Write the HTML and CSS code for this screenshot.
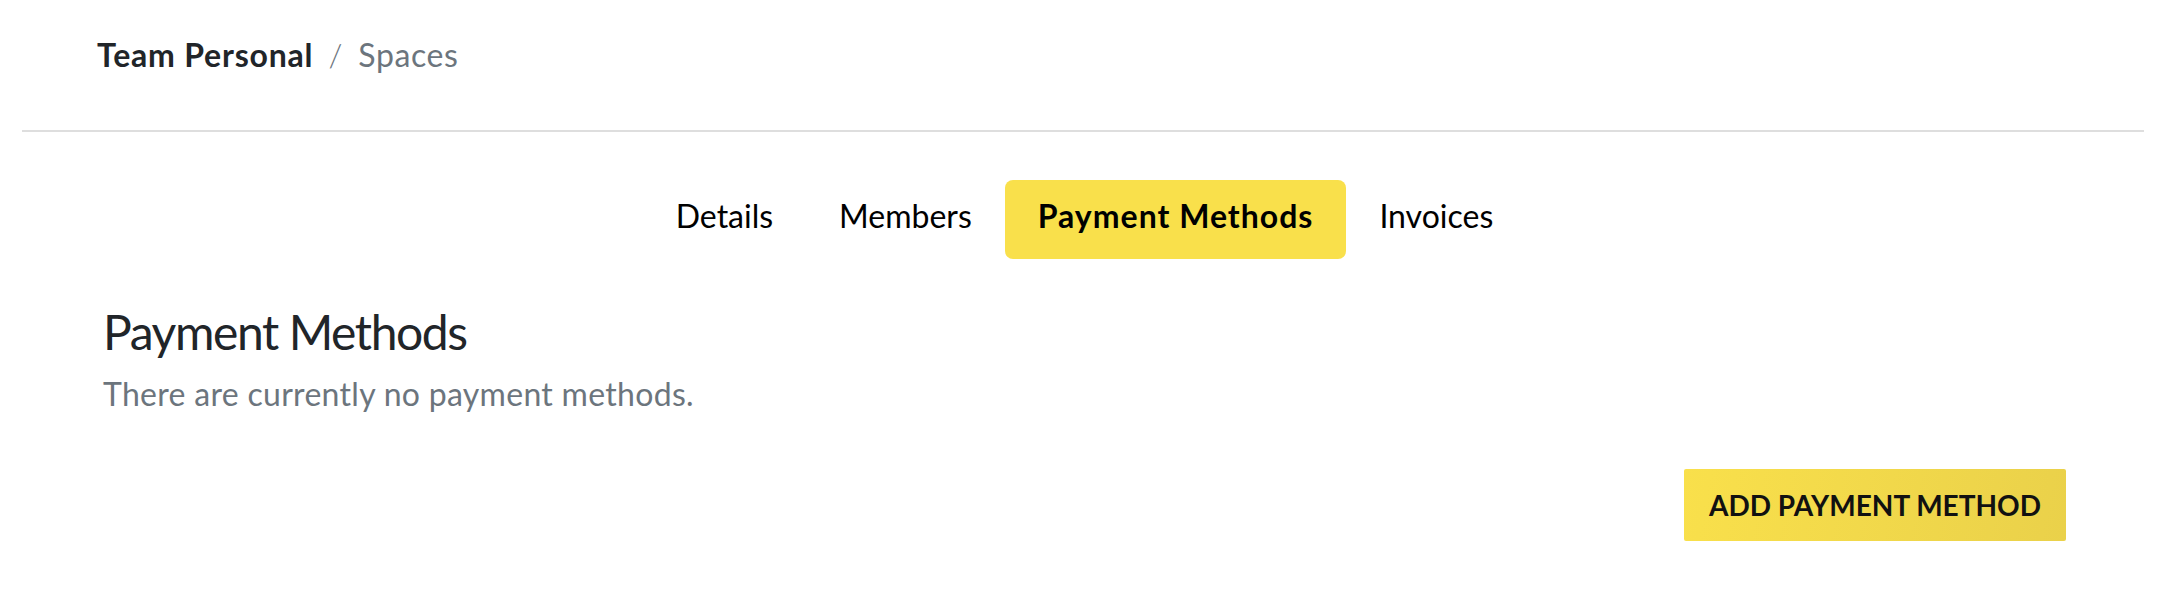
FILE: index.html
```html
<!DOCTYPE html>
<html lang="en">
<head>
<meta charset="utf-8">
<title>Team Personal / Spaces</title>
<link rel="stylesheet" href="styles.css">
</head>
<body>
<header class="topbar">
  <nav class="crumbs">
    <span class="crumb-main">Team Personal</span>
    <span class="crumb-sep">/</span>
    <span class="crumb-sub">Spaces</span>
  </nav>
</header>
<div class="divider"></div>
<main class="page">
  <div class="tabs">
    <a class="tab">Details</a>
    <a class="tab">Members</a>
    <a class="tab tab-active">Payment Methods</a>
    <a class="tab">Invoices</a>
  </div>
  <section class="content">
    <h1 class="title">Payment Methods</h1>
    <p class="empty">There are currently no payment methods.</p>
    <div class="actions">
      <button class="btn-add">ADD PAYMENT METHOD</button>
    </div>
  </section>
</main>
</body>
</html>
```

FILE: styles.css
```css
* { box-sizing: border-box; }
html, body { margin: 0; padding: 0; background: #fff; }
body { font-family: Lato, "Open Sans", sans-serif; color: #212529; }

.topbar {
  height: 130px;
  padding: 36px 0 0 97px;
}
.crumbs {
  display: flex;
  align-items: baseline;
  font-size: 32px;
  line-height: 38px;
}
.crumb-main { font-weight: 700; color: #212529; letter-spacing: 0.8px; }
.crumb-sep { color: #6c757d; margin: 0 16px 0 15px; font-weight: 300; }
.crumb-sub { color: #6c757d; font-weight: 400; letter-spacing: 0.6px; }

.divider {
  height: 2px;
  background: #dedede;
  margin: 0 28px 0 22px;
}

.page { padding: 48px 106px 0 103px; }

.tabs {
  display: flex;
  justify-content: center;
}
.tab {
  display: block;
  font-size: 32px;
  line-height: 38px;
  padding: 17px 33px 24px;
  color: #000;
  border-radius: 8px;
}
.tab-active {
  background: #f9e04b;
  font-weight: 700;
  letter-spacing: 1px;
}

.content { padding-top: 44px; }
.title {
  margin: 0;
  font-size: 48px;
  line-height: 58px;
  font-weight: 400;
  letter-spacing: -1.4px;
  color: #212529;
}
.empty {
  margin: 14px 0 0;
  font-size: 32px;
  line-height: 38px;
  letter-spacing: 0.3px;
  color: #6c757d;
}
.actions {
  display: flex;
  justify-content: flex-end;
  margin-top: 56px;
}
.btn-add {
  height: 72px;
  padding: 0 25px;
  border: 0;
  border-radius: 2px;
  background: linear-gradient(100deg, #f9e04b 0%, #ead14a 100%);
  font-family: Lato, sans-serif;
  font-size: 28px;
  font-weight: 700;
  letter-spacing: 0;
  color: #111;
}
```
